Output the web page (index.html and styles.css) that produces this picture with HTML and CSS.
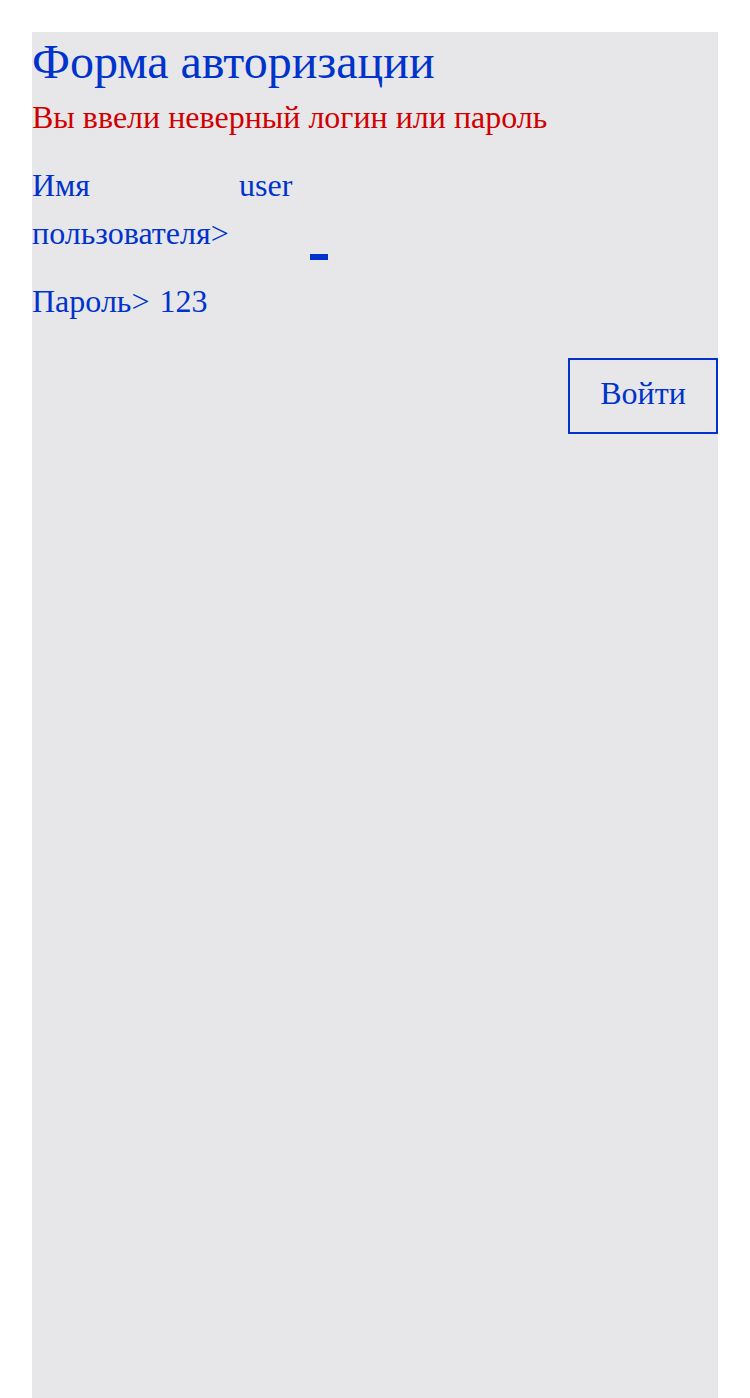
FILE: index.html
```html
<!DOCTYPE html>
<html lang="ru">
<head>
<meta charset="utf-8">
<title>Форма авторизации</title>
<link rel="stylesheet" href="styles.css">
</head>
<body>
<main class="panel">
  <h1 class="title">Форма авторизации</h1>
  <p class="error">Вы ввели неверный логин или пароль</p>
  <form class="form">
    <div class="row row-user">
      <label class="label label-user">Имя пользователя&gt;</label>
      <span class="value value-user">user</span>
      <span class="caret"></span>
    </div>
    <div class="row">
      <label class="label">Пароль&gt;</label>
      <span class="value value-pass">123</span>
    </div>
    <div class="actions">
      <button type="button" class="btn">Войти</button>
    </div>
  </form>
</main>
</body>
</html>
```
FILE: styles.css
```css
html, body {
  margin: 0;
  padding: 0;
  background: #ffffff;
}
body {
  padding: 32px 32px 0;
  font-family: "Liberation Serif", "Times New Roman", serif;
  color: #0033cc;
}
.panel {
  background: #e7e7ea;
  min-height: 1366px;
}
.title {
  margin: 0;
  font-weight: normal;
  font-size: 48px;
  line-height: 60px;
  color: #0033cc;
}
.error {
  margin: 0;
  font-size: 32px;
  line-height: 50px;
  color: #d10000;
}
.form {
  margin-top: 19px;
}
.row {
  display: flex;
  align-items: flex-start;
  font-size: 32px;
  line-height: 48px;
}
.row + .row {
  margin-top: 20px;
}
.row-user {
  position: relative;
}
.label-user {
  width: 200px;
}
.value-user {
  margin-left: 7px;
}
.value-pass {
  margin-left: 10px;
}
.caret {
  position: absolute;
  left: 278px;
  top: 93px;
  width: 18px;
  height: 6px;
  background: #0033cc;
}
.actions {
  display: flex;
  justify-content: flex-end;
  margin-top: 33px;
}
.btn {
  width: 150px;
  height: 76px;
  border: 2px solid #0033cc;
  background: transparent;
  color: #0033cc;
  font-family: "Liberation Serif", "Times New Roman", serif;
  font-size: 32px;
  padding: 0 0 6px;
}
```
